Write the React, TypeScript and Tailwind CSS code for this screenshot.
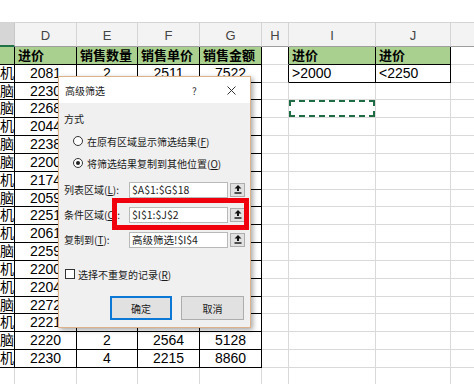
import React from "react";

const tableRows: string[][] = [
  ["手机", "2081", "2", "2511", "7522"],
  ["电脑", "2230", "1", "2540", "2540"],
  ["电脑", "2268", "3", "2513", "7539"],
  ["手机", "2044", "2", "2550", "5100"],
  ["电脑", "2238", "1", "2521", "2521"],
  ["电脑", "2200", "4", "2578", "10312"],
  ["手机", "2174", "2", "2515", "5030"],
  ["电脑", "2059", "3", "2560", "7680"],
  ["手机", "2251", "1", "2533", "2533"],
  ["手机", "2061", "2", "2512", "5024"],
  ["电脑", "2259", "3", "2545", "7635"],
  ["手机", "2200", "2", "2599", "5198"],
  ["手机", "2204", "1", "2586", "2586"],
  ["电脑", "2272", "2", "2530", "5060"],
  ["手机", "2221", "1", "2557", "2557"],
  ["电脑", "2220", "2", "2564", "5128"],
  ["手机", "2230", "4", "2215", "8860"],
];

const letters = ["", "D", "E", "F", "G", "H", "I", "J", ""];

function UploadBtn() {
  return (
    <div className="ml-[2px] flex h-[14px] w-[15px] items-center justify-center border border-[#adadad] bg-[#e1e1e1]">
      <svg width="8" height="9" viewBox="0 0 8 9">
        <path d="M4 0 L7.5 3.5 H5 V6 H3 V3.5 H0.5 Z" fill="#111" />
        <rect x="0.5" y="7.3" width="7" height="1.4" fill="#111" />
      </svg>
    </div>
  );
}

function InputRow({ label, hot, value }: { label: string; hot: string; value: string }) {
  return (
    <div className="flex h-[25px] items-center">
      <div className="w-[65px] whitespace-nowrap">
        {label}(<span className="underline">{hot}</span>):
      </div>
      <div className="flex h-[16px] w-[99px] items-center border border-[#b9b9b9] bg-white pl-[2px] text-[10.5px]">
        {value}
      </div>
      <UploadBtn />
    </div>
  );
}

function Dialog() {
  return (
    <div
      className="absolute left-[58px] top-[76px] flex h-[252px] w-[193px] flex-col border border-[#dcb388] bg-[#f0f0f0] text-[10px] text-[#1a1a1a] shadow-[2px_2px_5px_rgba(0,0,0,0.35)]"
      style={{ fontFamily: '"Noto Sans CJK SC", "Noto Sans", sans-serif' }}
    >
      <div className="relative flex h-[26px] shrink-0 items-center bg-white pl-[6px] text-[10px]">
        <span>高级筛选</span>
        <span className="absolute left-[133px] top-[6px] text-[10px] text-[#333]">?</span>
        <svg className="absolute left-[168px] top-[9px]" width="9" height="9" viewBox="0 0 9 9">
          <path d="M0.5 0.5 L8.5 8.5 M8.5 0.5 L0.5 8.5" stroke="#333" strokeWidth="1" />
        </svg>
      </div>
      <div className="flex flex-1 flex-col px-[5px]">
        <div className="mt-[9px] h-[14px] leading-[14px]">方式</div>
        <div className="mt-[4px] flex h-[22px] items-center">
          <div className="ml-[9px] h-[10px] w-[10px] rounded-full border border-[#333] bg-white" />
          <span className="ml-[4px]">
            在原有区域显示筛选结果(<span className="underline">F</span>)
          </span>
        </div>
        <div className="flex h-[22px] items-center">
          <div className="ml-[9px] flex h-[10px] w-[10px] items-center justify-center rounded-full border border-[#333] bg-white">
            <div className="h-[4px] w-[4px] rounded-full bg-[#222]" />
          </div>
          <span className="ml-[4px]">
            将筛选结果复制到其他位置(<span className="underline">O</span>)
          </span>
        </div>
        <div className="mt-[3px]">
          <InputRow label="列表区域" hot="L" value="$A$1:$G$18" />
          <InputRow label="条件区域" hot="C" value="$I$1:$J$2" />
          <InputRow label="复制到" hot="T" value="高级筛选!$I$4" />
        </div>
        <div className="mt-[12px] flex h-[20px] items-center">
          <div className="ml-[1px] h-[10px] w-[10px] border border-[#333] bg-white" />
          <span className="ml-[3px]">
            选择不重复的记录(<span className="underline">R</span>)
          </span>
        </div>
        <div className="mt-[12px] flex justify-end gap-[9px] pr-[1px]">
          <div className="flex h-[24px] w-[62px] items-center justify-center border border-[#0a78d4] bg-[#e1e1e1] shadow-[inset_0_0_0_1px_#0a78d4]">
            确定
          </div>
          <div className="flex h-[24px] w-[63px] items-center justify-center border border-[#adadad] bg-[#e1e1e1]">
            取消
          </div>
        </div>
      </div>
      <div className="absolute left-[53px] top-[121px] h-[32px] w-[137px] border-[5px] border-[#f0000c]" />
    </div>
  );
}

export default function App() {
  const numRows = 19;
  const rowsArr = Array.from({ length: numRows }, (_, i) => i);
  return (
    <div
      className="relative h-[384px] w-[474px] overflow-hidden bg-white"
      style={{ fontFamily: '"Liberation Sans", "Noto Sans CJK SC", sans-serif' }}
    >
      <div className="h-[23px] border-b border-[#d4d4d4] bg-white" />
      <div className="grid grid-cols-[15px_62px_61px_62px_62px_27px_87px_75px_84px]">
        {letters.map((l, ci) => (
          <div
            key={"h" + ci}
            className={
              ci === 0
                ? "flex h-[24px] items-center justify-center border-b-2 border-r border-b-[#217346] border-r-[#c8c8c8] bg-[#d6d6d6]"
                : "flex h-[24px] items-center justify-center border-b border-r border-b-[#9e9e9e] border-r-[#d4d4d4] bg-[#f3f3f3] pt-[2px] text-[13px] text-[#444]"
            }
          >
            {l}
          </div>
        ))}
        {rowsArr.map((ri) =>
          Array.from({ length: 9 }, (_, ci) => {
            const inMain = ci <= 4 && ri <= 17;
            const inCrit = (ci === 6 || ci === 7) && ri <= 1;
            const isHeader = ri === 0 && (ci <= 4 || ci === 6 || ci === 7);
            const blackRight = inMain || inCrit || (ci === 5 && ri <= 1);
            let text = "";
            if (ri === 0) {
              const hdr = ["品类", "进价", "销售数量", "销售单价", "销售金额", "", "进价", "进价", ""];
              text = hdr[ci];
            } else if (ri <= 17 && ci <= 4) {
              text = tableRows[ri - 1][ci];
            } else if (ri === 1 && ci === 6) {
              text = ">2000";
            } else if (ri === 1 && ci === 7) {
              text = "<2250";
            }
            const isMarquee = ri === 3 && ci === 6;
            return (
              <div
                key={ri + "-" + ci}
                className={
                  "relative flex h-[17.83px] items-center overflow-hidden whitespace-nowrap border-b border-r " +
                  (inMain || inCrit ? "border-b-black " : "border-b-[#d9d9d9] ") +
                  (blackRight ? "border-r-black " : "border-r-[#d9d9d9] ") +
                  (isHeader ? "bg-[#a9d08e] text-[13px] font-bold " : "text-[14px] ") +
                  (ci === 0
                    ? "justify-end "
                    : isHeader || inCrit
                    ? "justify-start pl-[3px] "
                    : "justify-center ") +
                  "text-black"
                }
              >
                {ci === 0 && isHeader ? "" : text}
                {isMarquee && (
                  <div className="absolute inset-0 border-2 border-dashed border-[#1f6b44]" />
                )}
              </div>
            );
          })
        )}
      </div>
      <Dialog />
    </div>
  );
}
